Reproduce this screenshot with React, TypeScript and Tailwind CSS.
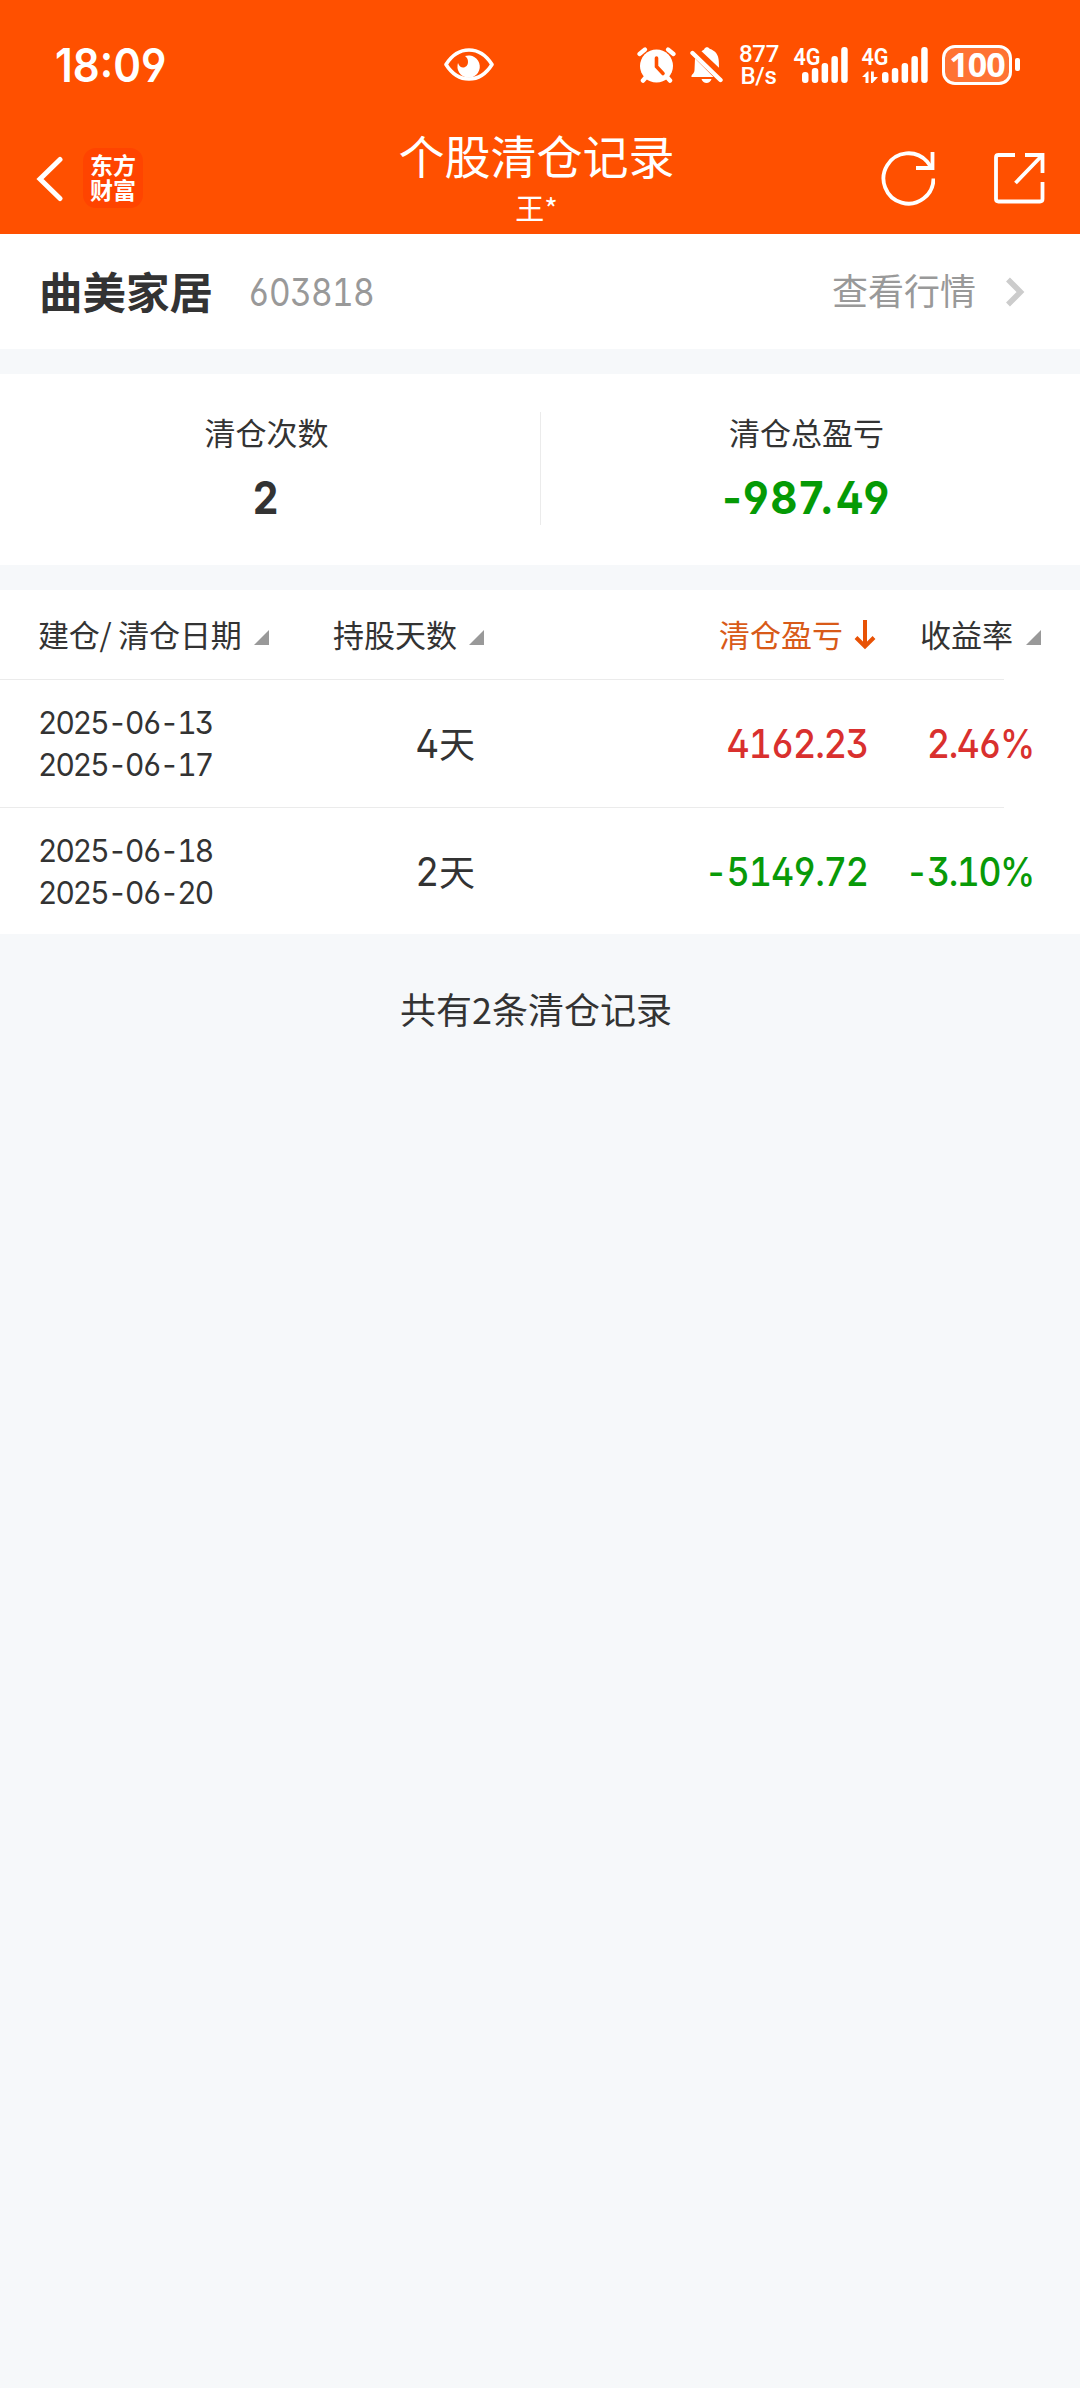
import React from 'react';

interface TradeRecord {
  open: string;
  close: string;
  days: number;
  profit: string;
  rate: string;
}

const records: TradeRecord[] = [
  { open: '2025-06-13', close: '2025-06-17', days: 4, profit: '4162.23', rate: '2.46%' },
  { open: '2025-06-18', close: '2025-06-20', days: 2, profit: '-5149.72', rate: '-3.10%' },
];

// Open, fixed-width digits for every figure on the page
const NUM = "font-['Inter','Noto_Sans_CJK_SC',sans-serif] [font-feature-settings:'ss01','tnum']";

const EyeIcon = () => (
  <svg className="h-[33px] w-[50px]" viewBox="0 0 50 33" fill="none">
    <path
      d="M2 16.5C8 7 15.500 2 25 2s17 5 23 14.5C42 26 34.500 31 25 31S8 26 2 16.500Z"
      stroke="#fff"
      strokeWidth="3.6"
      strokeLinejoin="round"
    />
    <path d="M21 8A11.200 11.200 0 1 1 14 15c1 3 3 4.500 5 4.500 3 0 5-2.500 5-5.500 0-2.800-1-4.500-3-6Z" fill="#fff" />
  </svg>
);

const AlarmIcon = () => (
  <svg className="h-9 w-[39px]" viewBox="0 0 39 36" fill="none" strokeLinecap="round">
    <path d="M2.500 7 8 2.500M36.500 7 31 2.500" stroke="#fff" strokeWidth="4.200" />
    <path d="m10 29-4 4.500M29 29l4 4.500" stroke="#fff" strokeWidth="4.500" />
    <circle cx="19.500" cy="19" r="16.500" fill="#fff" />
    <path d="M19.500 11v8.500l6.500 7" stroke="#ff5000" strokeWidth="3.600" />
  </svg>
);

const MuteIcon = () => (
  <svg className="h-9 w-[33px]" viewBox="0 0 33 36" fill="none">
    <path d="M11.500 4.300C13 3.200 14 2.900 14.500 1.800c.8-2 4.200-2 5 0 6 2 9 6 9.300 12.500l.2 6.500Z" fill="#fff" />
    <path d="M5 11.500 23.500 30H1.500C1 27 4.500 27 4.500 23Z" fill="#fff" />
    <path d="M2.500 6 30.500 33" stroke="#fff" strokeWidth="4.400" strokeLinecap="round" />
    <path d="M11.500 32h10c-1.500 5.200-8.500 5.200-10 0Z" fill="#fff" />
  </svg>
);

const bars = [
  { top: 25, x: 0 },
  { top: 21, x: 9.8 },
  { top: 16, x: 19.6 },
  { top: 9, x: 29.4 },
  { top: 0, x: 39.2 },
];

const SignalIcon: React.FC<{ data?: boolean }> = ({ data }) => (
  <svg
    className={data ? 'h-9 w-[66px]' : 'h-9 w-[54px]'}
    viewBox={data ? '0 0 66 36' : '0 0 54 36'}
    fill="#fff"
    overflow="visible"
  >
    <text
      x="-0.500"
      y="17.500"
      className="font-['Roboto',sans-serif] text-[24px] font-semibold"
      textLength="27"
      lengthAdjust="spacingAndGlyphs"
    >
      4G
    </text>
    {data && <path d="M0 30 5.500 24.500H6.500V36H3.500V30ZM9 24.500h2.800V30H16l-5.500 6H9Z" />}
    {bars.map((b) => (
      <rect key={b.x} x={b.x + (data ? 20 : 8)} y={b.top} width="6.500" height={36 - b.top} rx="3" />
    ))}
  </svg>
);

const StatusBar = () => (
  <div className="flex h-[126px] items-center pl-[55px] pr-[60px] pt-[3px] text-white">
    <div className="w-[389px]">
      <span className="block origin-left scale-x-[0.915] whitespace-nowrap font-['Inter',sans-serif] text-[46px] font-semibold leading-[60px] [font-feature-settings:'ss01']">
        18:09
      </span>
    </div>
    <EyeIcon />
    <div className="ml-auto flex items-center">
      <AlarmIcon />
      <div className="ml-[14px]">
        <MuteIcon />
      </div>
      <div className="ml-[16px] w-[39px] whitespace-nowrap text-center font-['Roboto',sans-serif] text-[24px] font-medium leading-[22px] -tracking-[0.300px]">
        877
        <br />
        B/s
      </div>
      <div className="ml-4">
        <SignalIcon />
      </div>
      <div className="ml-[14px]">
        <SignalIcon data />
      </div>
      <div className="ml-[14px] flex h-10 w-[70px] items-center justify-center rounded-[13px] border-[3.500px] border-white bg-white/20 pb-[2px] font-['Noto_Sans',sans-serif] text-[34px] font-bold leading-none">
        <span className="-tracking-[1px]">100</span>
      </div>
      <div className="ml-[3px] h-[13px] w-[5px] rounded-[2px] bg-white" />
    </div>
  </div>
);

const TitleBar = () => (
  <div className="flex h-[108px] justify-between text-white">
    <div className="flex w-[383px] items-start pl-[36px] pt-[22px]">
      <svg className="mt-[8px] h-[46px] w-[28px]" viewBox="0 0 28 46" fill="none">
        <path d="M24 3.500 4 23 24 42.500" stroke="#fff" strokeWidth="5" strokeLinecap="round" strokeLinejoin="miter" />
      </svg>
      <div className="ml-[19px] h-[60px] w-[60px] rounded-[13px] bg-[#ff4400] pt-[4px] text-center font-['Noto_Sans_CJK_SC',sans-serif] text-[23px] font-bold leading-[25px]">
        东方
        <br />
        财富
      </div>
    </div>
    <div className="flex flex-col items-center whitespace-nowrap font-['Noto_Sans_CJK_SC',sans-serif]">
      <h1 className="-mt-[2px] text-[46px] leading-[60px]">个股清仓记录</h1>
      <span className="mt-[3px] text-[29px] leading-[40px]">王*</span>
    </div>
    <div className="flex w-[390px] justify-end pr-[33px] pt-[24px]">
      <svg className="h-[56px] w-[56px]" viewBox="0 0 56 56" fill="none" stroke="#fff" strokeWidth="3.800">
        <path d="M54.500 28.500A25 25.200 0 1 1 48 11.500L52 17" />
        <path d="M53.500 2v16H37" />
      </svg>
      <svg className="ml-[55px] mr-px h-[56px] w-[56px]" viewBox="0 0 56 56" fill="none" stroke="#fff" strokeWidth="3.800">
        <path d="M25 5H8.500Q6 5 6 7.500V49q0 2.500 2.500 2.500H50q2.500 0 2.500-2.500V32" />
        <path d="M35 5h17.500v18M52.500 5 25.500 33" />
      </svg>
    </div>
  </div>
);

const SortMark = () => (
  <svg className="mt-[7px] h-[15px] w-[15px] shrink-0" viewBox="0 0 15 15">
    <path d="M15 0v15H0Z" fill="#999" />
  </svg>
);

const TableHead = () => (
  <div className="flex h-[89px] items-center whitespace-nowrap pb-[2px] pl-[38px] text-[31px] leading-[40px]">
    <div className="flex w-[295px] items-center">
      <span className="w-[216px] -tracking-[0.200px]">建仓/ 清仓日期</span>
      <SortMark />
    </div>
    <div className="flex w-[386px] items-center">
      <span className="w-[136px]">持股天数</span>
      <SortMark />
    </div>
    <div className="flex w-[201px] items-center text-[#d85a18]">
      <span className="w-[135px]">清仓盈亏</span>
      <svg className="mt-[3px] h-[30px] w-[22px]" viewBox="0 0 22 30" fill="none" stroke="#e85205" strokeWidth="4">
        <path d="M11 0v27M2 17.500l9 9 9-9" />
      </svg>
    </div>
    <div className="flex items-center">
      <span className="w-[106px]">收益率</span>
      <SortMark />
    </div>
  </div>
);

const RecordRow: React.FC<{ record: TradeRecord }> = ({ record }) => {
  const color = record.profit.startsWith('-') ? 'text-[#089a08]' : 'text-[#d9302e]';

  return (
    <div>
      <div className="h-px w-[1004px] bg-[#ebebeb]" />
      <div className={`flex h-[127px] items-center whitespace-nowrap pl-[38px] font-[450] ${NUM}`}>
        <div className="w-[302px] text-[31.500px] font-normal leading-[42px] -tracking-[2.100px]">
          <div className="origin-left scale-x-[0.950]">{record.open}</div>
          <div className="origin-left scale-x-[0.950]">{record.close}</div>
        </div>
        <div className="w-[135px] pt-px text-right text-[36px] font-normal">
          <span className="inline-block origin-right scale-x-[0.950] text-[39px]">{record.days}</span>天
        </div>
        <div className={`w-[393px] origin-right scale-x-[0.920] pt-[2px] text-right text-[39px] -tracking-[1.200px] ${color}`}>
          {record.profit}
        </div>
        <div className={`w-[166px] origin-right scale-x-[0.910] pt-[2px] text-right text-[39px] -tracking-[1.500px] ${color}`}>
          {record.rate}
        </div>
      </div>
    </div>
  );
};

const App: React.FC = () => {
  return (
    <div className="min-h-[2388px] w-[1080px] bg-[#f6f8fa] font-['Noto_Sans_CJK_SC',sans-serif] text-[#333]">
      <header className="h-[234px] bg-[#ff5000]">
        <StatusBar />
        <TitleBar />
      </header>

      <section className="flex h-[115px] items-center bg-white pl-[39px] pr-[55px]">
        <h2 className="-mt-[2px] text-[43.500px] font-bold leading-[60px]">曲美家居</h2>
        <span className={`ml-[35px] w-[160px] origin-left scale-x-[0.880] text-[38px] leading-[50px] -tracking-[0.800px] text-[#999] ${NUM}`}>
          603818
        </span>
        <span className="-mt-[6px] ml-auto text-[36px] leading-[50px] text-[#999]">查看行情</span>
        <svg className="ml-[29px] h-[30px] w-[20px]" viewBox="0 0 20 30" fill="none">
          <path d="M3 2.500 15.500 15 3 27.500" stroke="#ccc" strokeWidth="5.500" />
        </svg>
      </section>

      <section className="mt-[25px] flex h-[191px] items-center bg-white text-center">
        <div className="w-[540px] pb-[6px] pr-[7px]">
          <div className="text-[31px] leading-[44px]">清仓次数</div>
          <div className={`mt-[19px] scale-x-[0.900] pr-[2px] text-[45px] font-bold leading-[50px] ${NUM}`}>2</div>
        </div>
        <div className="mb-[2px] h-[113px] w-px bg-[#ebebeb]" />
        <div className="w-[539px] pb-[6px] pr-[8px]">
          <div className="text-[31px] leading-[44px]">清仓总盈亏</div>
          <div className="mt-[19px] scale-x-[0.930] font-['Inter',sans-serif] text-[45px] font-bold leading-[50px] tracking-[1.700px] text-[#059a05] [font-feature-settings:'ss01']">
            -987.49
          </div>
        </div>
      </section>

      <section className="mt-[25px] h-[344px] bg-white">
        <TableHead />
        {records.map((record) => (
          <RecordRow key={record.open} record={record} />
        ))}
      </section>

      <div className="w-[1072px] pt-[49px] text-center text-[36px] leading-[50px]">共有{records.length}条清仓记录</div>
    </div>
  );
};

export default App;
